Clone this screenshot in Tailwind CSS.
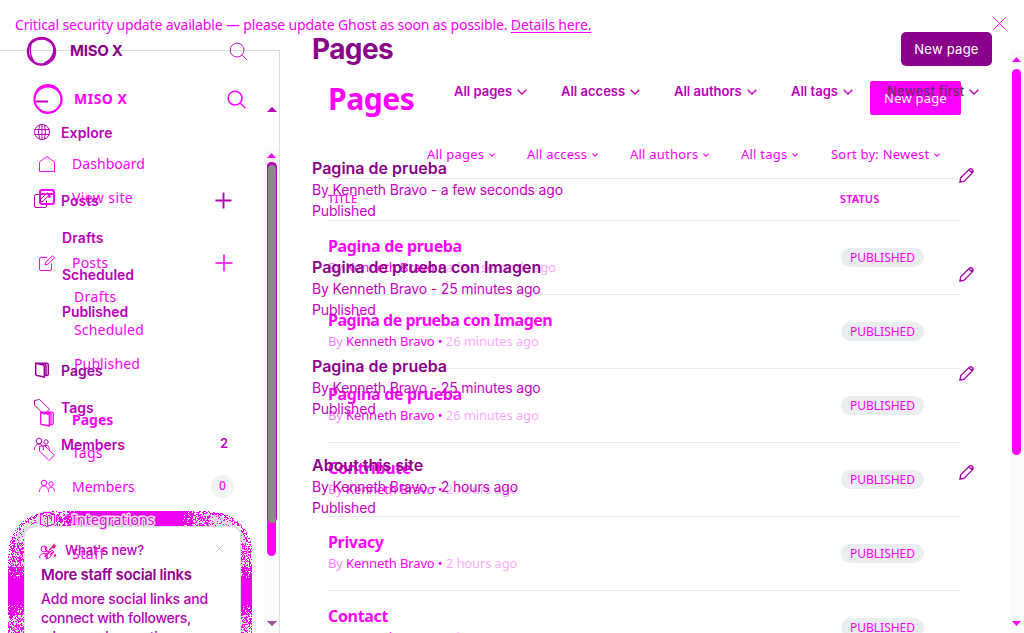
<!DOCTYPE html>
<html lang="en">
<head>
<meta charset="utf-8">
<title>Pages</title>
<script src="https://cdn.jsdelivr.net/npm/@tailwindcss/browser@4"></script>
</head>
<body class="relative w-[1024px] h-[633px] overflow-hidden bg-white">
<svg class="hidden">
  <symbol id="search" viewBox="0 0 20 20"><circle cx="8.5" cy="8.5" r="7.3"/><path d="M14 14l5.3 5"/></symbol>
  <symbol id="chev" viewBox="0 0 10 6"><path d="M.7.7L5 5 9.3.7"/></symbol>
  <symbol id="edit" viewBox="0 0 16 16"><path d="M8 2.5H2a1.500 1.500 0 0 0-1.500 1.500v10a1.500 1.500 0 0 0 1.500 1.500h9a1.500 1.500 0 0 0 1.500-1.500V8.500M6 10l.8-3L13.500.8l2 1.800L9 9.200z"/></symbol>
  <symbol id="pages" viewBox="0 0 16 16"><path d="M1.700 1.200L9 3q1.300.400 1.300 1.700v10.300L3 13.500q-1.300-.300-1.300-1.500zM1.700 1.200h11q1.600 0 1.600 1.600v9.200q0 1.600-1.600 1.600h-2.400M9 1.500q3 .5 3 2.500v9.500"/></symbol>
  <symbol id="tag" viewBox="0 0 16 16"><path d="M.5 1.500L5.500.5l10 9.700-5.500 5.300L.5 6z"/></symbol>
  <symbol id="members" viewBox="0 0 16 16"><circle cx="5" cy="5" r="2.800"/><circle cx="12" cy="6" r="2.200"/><path d="M.5 14c0-8 9-8 9 0M9.500 10.500c3-2.500 6-.5 6 3"/></symbol>
  <symbol id="pencil" viewBox="0 0 16 16"><path d="M1 15l.8-4.500L11 1.300c2-1.500 5 .8 3.700 3.400L5.500 14zM10.500 2L14 5.500M12 3.500h2.500M1 14.500h4"/></symbol>
  <symbol id="plus" viewBox="0 0 18 18"><path d="M9 .5v17M.5 9h17"/></symbol>
</svg>

<!-- first layer -->
<div class="absolute inset-0 flex flex-col overflow-hidden font-['Noto_Sans',sans-serif] text-[#ff00ff] text-[14px] whitespace-nowrap">
  <header class="h-[50px] shrink-0 flex items-center justify-between pl-[15px] pr-[18px] tracking-[-0.14px]">
    <p class="leading-[20px]">Critical security update available — please update Ghost as soon as possible. <span class="underline underline-offset-2">Details here.</span></p>
    <svg class="size-[13px] mb-[3px] fill-none stroke-current" viewBox="0 0 13 13"><path d="M.5.5l12 12M12.500.5l-12 12"/></svg>
  </header>
  <div class="flex h-[583px]">
    <aside class="w-[280px] shrink-0 border-t border-r border-[#dddddd] flex flex-col">
      <div class="h-[96px] shrink-0 flex items-center pl-[32px]">
        <svg class="size-[32px] fill-none stroke-current" viewBox="0 0 32 32"><ellipse cx="16" cy="16.500" rx="13.500" ry="13" stroke-width="2.200"/><path d="M2.500 13C4 5 11 1 18 2c10 2 14 12 10 20-4 9-15 10-20 6" stroke-width="1.500"/><path d="M4 9Q12 0 22 3" stroke-width="1"/><path d="M4 18.500h12" stroke="#c000c0" stroke-width="2"/></svg>
        <b class="ml-[10px] w-[153px] mt-[-1px] tracking-[.5px]">MISO X</b>
        <svg class="size-[19px] fill-none stroke-current stroke-[1.600]"><use href="#search"/></svg>
      </div>
      <div class="flex h-[486px]">
        <nav class="w-[264px] shrink-0 overflow-hidden [&>div]:h-[33.500px] [&>div]:shrink-0 [&>div]:flex [&>div]:items-center flex flex-col pl-[39px] [&_svg]:fill-none [&_svg]:stroke-current [&_svg]:shrink-0">
          <div class="tracking-[.06px]"><svg class="size-4 mr-[17px]" viewBox="0 0 16 16"><path d="M.5 6L8 .5 15.500 6v9.500H.5z"/></svg>Dashboard</div>
          <div class="tracking-[.4px]"><svg class="size-4 mr-[17px] stroke-2" viewBox="0 0 16 16"><rect x="1" y="1" width="14" height="14" rx="2"/><path d="M1 5h14M10.500 5v4" /></svg>View site</div>
          <div class="mt-[32px] tracking-[.2px]"><svg class="size-4 mr-[17px]"><use href="#edit"/></svg><span class="w-[143px]">Posts</span><svg class="size-[18px] stroke-[1.500]"><use href="#plus"/></svg></div>
          <div class="pl-[35px] tracking-[.4px]">Drafts</div>
          <div class="pl-[35px] tracking-[.18px]">Scheduled</div>
          <div class="pl-[35px] tracking-[.13px]">Published</div>
          <div class="mt-[22.500px] font-bold"><svg class="size-4 mr-[17px] stroke-[1.300]"><use href="#pages"/></svg>Pages</div>
          <div class="tracking-[.2px]"><svg class="size-4 mr-[17px]"><use href="#tag"/></svg>Tags</div>
          <div><svg class="size-4 mr-[17px]"><use href="#members"/></svg><span class="w-[139px]">Members</span><span class="size-[23px] rounded-full bg-[#f1f3f5] flex items-center justify-center text-[12px] font-medium">0</span></div>
          <div></div>
          <div class="tracking-[.5px]"><svg class="size-4 mr-[17px]" viewBox="0 0 16 16"><circle cx="5" cy="4" r="3"/><path d="M.5 13c0-6 8-6 8 0M7 14l1-4 5-5 2 2-5 6z"/></svg>Staff</div>
        </nav>
        <div class="w-[15px] bg-[#fbfbfb] flex flex-col pl-[3px]">
          <svg class="mt-[6px] w-[9px] h-[5px] fill-current" viewBox="0 0 9 5"><path d="M0 5L4.500 0 9 5z"/></svg>
          <div class="mt-[4px] w-[9px] h-[394px] rounded-full bg-[#ff00ff]"></div>
        </div>
      </div>
    </aside>
    <main class="w-[730px] shrink-0 pl-[48px] pr-[49px] overflow-hidden">
      <div class="h-[98px] flex items-center justify-between">
        <h1 class="text-[30px] mt-[-2px] font-bold tracking-[-.4px]">Pages</h1>
        <div class="w-[91px] h-[34px] mt-[-2px] rounded-[2px] bg-[#ff00ff] text-white text-[13px] tracking-[.2px] flex items-center justify-center pt-[1px]">New page</div>
      </div>
      <div class="h-[30px] flex items-start justify-end pr-[20px] text-[13px] leading-[13px] tracking-[.22px] [&_svg]:w-[6px] [&_svg]:h-[4px] [&_svg]:fill-none [&_svg]:stroke-current [&_svg]:stroke-[1.700] [&>div]:flex [&>div]:items-center">
        <div class="w-[100px]">All pages<svg class="ml-[5px]"><use href="#chev"/></svg></div>
        <div class="w-[103px]">All access<svg class="ml-[5px]"><use href="#chev"/></svg></div>
        <div class="w-[111px]">All authors<svg class="ml-[5px]"><use href="#chev"/></svg></div>
        <div class="w-[90px]">All tags<svg class="ml-[5px]"><use href="#chev"/></svg></div>
        <div class="w-[110px]">Sort by: Newest<svg class="ml-[5px]"><use href="#chev"/></svg></div>
      </div>
      <div class="h-[43px] border-t border-b border-[#e5e7e9] flex items-center text-[11px] font-medium tracking-[.2px]"><span class="w-[512px]">TITLE</span><span class="font-semibold tracking-[.1px]">STATUS</span></div>
      <div id="rows"></div>
    </main>
    <div class="w-[14px] bg-[#fbfbfb] flex flex-col pl-[2px] pt-[7px]">
      <svg class="w-[9px] h-[5px] fill-current shrink-0" viewBox="0 0 9 5"><path d="M0 5L4.500 0 9 5z"/></svg>
      <div class="mt-[7px] w-[9px] h-[386px] shrink-0 rounded-full bg-[#ff00ff]"></div>
      <svg class="mt-[166px] w-[9px] h-[5px] fill-current shrink-0" viewBox="0 0 9 5"><path d="M0 0h9L4.500 5z"/></svg>
    </div>
  </div>
</div>

<!-- second layer -->
<div class="absolute inset-0 flex overflow-hidden font-['Inter',sans-serif] text-[#b800b8] text-[14px] whitespace-nowrap">
  <aside class="w-[280px] shrink-0 relative flex flex-col">
    <div class="h-[102px] shrink-0 flex items-center pl-[26px]">
      <svg class="size-[31px] fill-none stroke-[#b000b0]" viewBox="0 0 32 32"><ellipse cx="16" cy="16" rx="14" ry="13.500" stroke-width="2.500"/><path d="M3 10C7 1 21-1 27 7c5 8 0 18-8 21" stroke-width="2"/><path d="M5 8Q3 20 8 26" stroke-width="1.500"/></svg>
      <b class="ml-[13px] w-[159px] text-[15px] tracking-[-.25px] text-[#8a008a]">MISO X</b>
      <svg class="size-[19px] fill-none stroke-current stroke-1"><use href="#search"/></svg>
    </div>
    <nav class="mt-[11.500px] h-[398px] shrink-0 pl-[34px] font-semibold [&>div]:h-[37px] [&>div]:flex [&>div]:items-center [&_svg]:fill-none [&_svg]:stroke-current [&_svg]:shrink-0">
      <div class="tracking-[.1px]"><svg class="size-4 mr-[11px]" viewBox="0 0 16 16"><circle cx="8" cy="8" r="7.500"/><path d="M.5 5.500h15M.5 10.500h15M8 .5v15M5.500 1Q3.500 8 5.500 15M10.500 1Q12.500 8 10.500 15"/></svg>Explore</div>
      <div class="mt-[31px]"><svg class="size-4 mr-[11px]"><use href="#edit"/></svg><span class="w-[153px]">Posts</span><svg class="size-[17px] ml-px stroke-2"><use href="#plus"/></svg></div>
      <div class="pl-[28px] tracking-[.1px]">Drafts</div>
      <div class="pl-[28px]">Scheduled</div>
      <div class="pl-[28px] tracking-[-.1px]">Published</div>
      <div class="mt-[22px] text-[#9c009c]"><svg class="size-4 mr-[11px] stroke-[1.500]"><use href="#pages"/></svg>Pages</div>
      <div><svg class="size-4 mr-[11px]"><use href="#tag"/></svg>Tags</div>
      <div><svg class="size-4 mr-[11px]"><use href="#members"/></svg><span class="w-[158px]">Members</span><span class="text-[13px] ml-px">2</span></div>
    </nav>
    <svg id="ring" class="absolute left-0 top-[511px] w-[260px] h-[122px]" shape-rendering="crispEdges"></svg>
    <section class="ml-[25px] mt-[14.500px] w-[215px] h-[107px] shrink-0 overflow-hidden rounded-t-[10px] pl-[16px] pt-[17px] relative">
      <div class="flex items-center h-[16px] text-[13px] font-medium tracking-[-.1px]">
        <svg class="size-4 fill-none stroke-[#ee00aa] mr-[8px]" viewBox="0 0 16 16"><path d="M4 4l1 4 4 1-4 2-1 3M8 7l4-3M9 12l3-3" stroke-width="1.300"/><path d="M13 0l1 2.500 2 .5-2 1-1 2.500-1-2.500-2-1 2-.5zM14 10l.7 2 1.300.5-1.300.5-.7 2-.7-2-1.300-.5 1.300-.5z" fill="#ff0080" stroke="none"/></svg>
        <span class="w-[150px]">What's new?</span>
        <svg class="size-[9px] mb-[5px] fill-none stroke-[#d0d0d0]" viewBox="0 0 9 9"><path d="M.5.5l8 8M8.500.5l-8 8"/></svg>
      </div>
      <h3 class="mt-[6px] text-[15px] leading-[20px] font-semibold tracking-[-.34px] text-[#940094]">More staff social links</h3>
      <p class="mt-[4px] leading-[19px] font-medium tracking-[-.17px]">Add more social links and<br><span class="tracking-[-.25px]">connect with followers,</span><br>when you're posting</p>
    </section>
    <svg class="absolute left-[267px] top-[107px] w-[10px] h-[5px] fill-[#b800b8]" viewBox="0 0 10 5"><path d="M0 5L5 0l5 5z"/></svg>
    <div class="absolute left-[267px] top-[162px] w-[10px] h-[361px] rounded-full bg-[#b800b8] pt-[3px] pl-[1px]"><div class="w-[8px] h-[358px] rounded-full bg-[#8a8a8a]"></div></div>
    <svg class="absolute left-[267px] top-[621px] w-[10px] h-[5px] fill-[#8a6a8a] stroke-[#b800b8]" viewBox="0 0 10 5"><path d="M.5.5h9L5 4.500z" stroke-width=".6"/></svg>
  </aside>
  <main class="w-[712px] shrink-0 pl-[32px]">
    <div class="pt-[32px] flex items-center justify-between h-[66px]">
      <h1 class="text-[28px] font-bold tracking-[-.6px] text-[#8a008a]">Pages</h1>
      <div class="w-[91px] h-[34px] rounded-[5px] bg-[#8a008a] text-white text-[13px] tracking-[.25px] flex items-center justify-center pt-px">New page</div>
    </div>
    <div class="h-[52px] pl-[142px] flex items-center text-[13px] font-semibold [&_svg]:w-[10px] [&_svg]:h-[6px] [&_svg]:fill-none [&_svg]:stroke-current [&_svg]:stroke-[1.300] [&>div]:flex [&>div]:items-center [&>div]:shrink-0">
      <div class="w-[107px]">All pages<svg class="ml-[5px]"><use href="#chev"/></svg></div>
      <div class="w-[113px]">All access<svg class="ml-[5px]"><use href="#chev"/></svg></div>
      <div class="w-[117px]">All authors<svg class="ml-[5px]"><use href="#chev"/></svg></div>
      <div class="w-[96px]">All tags<svg class="ml-[5px]"><use href="#chev"/></svg></div>
      <div><span class="font-medium tracking-[.2px] text-[#6b2a6b]">Newest first</span><svg class="ml-[5px]"><use href="#chev"/></svg></div>
    </div>
    <div id="list" class="pt-[40px]"></div>
  </main>
</div>
<script>
const pages = [
  ['Pagina de prueba', 'a few seconds ago'],
  ['Pagina de prueba con Imagen', '26 minutes ago'],
  ['Pagina de prueba', '26 minutes ago'],
  ['Contribute', '2 hours ago'],
  ['Privacy', '2 hours ago'],
  ['Contact', '2 hours ago']
];
document.getElementById('rows').innerHTML = pages.map(([t, d], i) => `
  <div class="h-[74px] border-b border-[#e9ebee] flex">
    <div class="w-[513px] pt-[14px]">
      <div class="text-[16px] leading-[22px] font-bold ${i === 1 ? 'tracking-[-.5px]' : 'tracking-[-.34px]'}">${t}</div>
      <div class="text-[13px] leading-[20px] tracking-[-.13px]"><span class="text-[#ff00ff]/50">By</span> Kenneth Bravo • <span class="text-[#ff00ff]/35">${d}</span></div>
    </div>
    <div class="mt-[27px] w-[83px] h-[19px] rounded-full bg-[#ebeef0] text-[12px] leading-[19px] text-center">PUBLISHED</div>
  </div>`).join('');
const posts = [
  ['Pagina de prueba', 'a few seconds ago'],
  ['Pagina de prueba con Imagen', '25 minutes ago'],
  ['Pagina de prueba', '25 minutes ago'],
  ['About this site', '2 hours ago']
];
document.getElementById('list').innerHTML = posts.map(([t, d]) => `
  <div class="h-[99px] flex leading-[21px] text-[#c800c8]">
    <div class="w-[647px]">
      <div class="text-[16px] font-semibold text-[#8a008a]">${t}</div>
      <div class="tracking-[-.16px]">By Kenneth Bravo - ${d}</div>
      <div class="tracking-[-.14px]">Published</div>
    </div>
    <svg class="size-[15px] mt-[9.500px] fill-none stroke-[#a800a8] stroke-[1.400]"><use href="#pencil"/></svg>
  </div>`).join('');

// dithered halo around the card
let seed = 7;
const rnd = () => (seed = (seed * 16807) % 2147483647) / 2147483647;
const inside = (x, y, l, r, t, q) => {
  if (x < l || x >= r || y < t) return false;
  const cx = x < l + q ? l + q : x >= r - q ? r - q : x, cy = y < t + q ? t + q : y;
  return (x - cx) ** 2 + (y - cy) ** 2 <= q * q;
};
let pink = '', grey = '', white = '';
for (let y = 0; y < 122; y++) for (let x = 8; x < 252; x++) {
  if (inside(x, y, 25, 240, 16, 9)) continue;
  if (!inside(x, y, 8, 252, 0, 42)) continue;
  const e = Math.min(x, 259 - x);
  let p;
  if (y < 15 && e > 24) p = e > 76 ? 1 : e > 66 ? .85 : e > 50 ? .5 : .15;
  else p = y > 66 && y < 94 ? 1 : y > 55 && y < 104 ? .82 : y < 32 ? .15 : .5;
  const corner = !inside(x, y, 12, 248, 3, 40);
  if (corner && e < 50 && y < 45) p = .5;
  if (y >= 15) { if (x > 23 && x < 241) p = 0; }
  if (rnd() < p) pink += `M${x} ${y}h1v1h-1z`;
  else if (corner) white += `M${x} ${y}h1v1h-1z`;
  else grey += `M${x} ${y}h1v1h-1z`;
}
document.getElementById('ring').innerHTML = `
  <path fill="#f000f0" d="${pink}"/><path fill="#e0e0e0" d="${grey}"/><path fill="#fff" d="${white}"/>
  <g fill="none" stroke="#e0e0e0" stroke-width="3.500"><path d="M47 1l7 2v10l-7 2.500-7-2.500V3z"/></g>
  <g fill="none" stroke="#f000f0"><path d="M47 1l7 2v10l-7 2.500-7-2.500V3zM40 3l7 2.500L54 3M47 5.500v10"/></g>
  <text x="72" y="14" font-family="Noto Sans, sans-serif" font-size="14" letter-spacing=".16" fill="#f000f0" stroke="#e2e2e2" stroke-width="3" paint-order="stroke">Integrations</text>`;
</script>
</body>
</html>
